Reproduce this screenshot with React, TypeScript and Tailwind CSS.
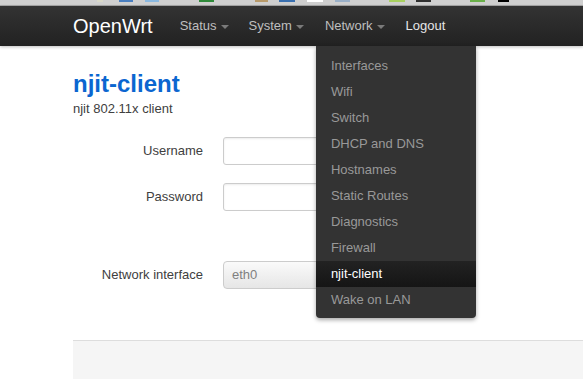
import React from "react";

const bookmarks: { left: number; width: number; color: string }[] = [
  { left: 97, width: 6, color: "#d8d8c8" },
  { left: 119, width: 14, color: "#4a7fc0" },
  { left: 145, width: 14, color: "#8ab8e0" },
  { left: 199, width: 15, color: "#2f8a3a" },
  { left: 255, width: 13, color: "#b89a6a" },
  { left: 279, width: 16, color: "#3a70b0" },
  { left: 307, width: 16, color: "#ffffff" },
  { left: 335, width: 15, color: "#9ab0c8" },
  { left: 389, width: 16, color: "#a8d060" },
  { left: 416, width: 15, color: "#303030" },
  { left: 470, width: 15, color: "#6ab04a" },
  { left: 498, width: 11, color: "#000000" },
];

const menu = [
  "Interfaces",
  "Wifi",
  "Switch",
  "DHCP and DNS",
  "Hostnames",
  "Static Routes",
  "Diagnostics",
  "Firewall",
  "njit-client",
  "Wake on LAN",
];

function Caret() {
  return (
    <span className="ml-[4px] mt-[2px] inline-block h-0 w-0 border-x-[4px] border-t-[4px] border-x-transparent border-t-[#7a7a7a]" />
  );
}

export default function App() {
  return (
    <div
      className="relative h-[379px] w-[583px] overflow-hidden bg-white"
      style={{ fontFamily: '"Liberation Sans", Arial, Helvetica, sans-serif' }}
    >
      {/* browser bookmark strip remnant */}
      <div className="relative h-[6px] border-b border-[#a8a8a8] bg-[#cfcfcf]">
        {bookmarks.map((b, i) => (
          <span
            key={i}
            className="absolute top-0 h-[2px]"
            style={{ left: b.left, width: b.width, background: b.color }}
          />
        ))}
      </div>

      {/* top bar */}
      <div className="relative z-10 flex h-[40px] items-center bg-gradient-to-b from-[#333333] to-[#222222] pl-[73px] shadow-[0_1px_3px_rgba(0,0,0,0.25)]">
        <span className="mr-[17px] text-[20px] leading-[40px] text-white">OpenWrt</span>
        <div className="flex h-full items-center">
          <div className="flex h-full items-center px-[10px] text-[13px] text-[#bfbfbf]">
            Status
            <Caret />
          </div>
          <div className="flex h-full items-center px-[10px] text-[13px] text-[#bfbfbf]">
            System
            <Caret />
          </div>
          <div className="relative flex h-full items-center pl-[11px] pr-[10px] text-[13px] text-[#bfbfbf]">
            Network
            <Caret />
            <div className="absolute left-[2px] top-[40px] w-[160px] rounded-b-[4px] bg-[#333333] pb-[5px] pt-[7px] shadow-[0_2px_4px_rgba(0,0,0,0.35)]">
              {menu.map((m) =>
                m === "njit-client" ? (
                  <div
                    key={m}
                    className="h-[26px] bg-gradient-to-b from-[#222222] to-[#151515] px-[15px] text-[13px] leading-[26px] text-white"
                  >
                    {m}
                  </div>
                ) : (
                  <div key={m} className="h-[26px] px-[15px] text-[13px] leading-[26px] text-[#999999]">
                    {m}
                  </div>
                )
              )}
            </div>
          </div>
          <div className="flex h-full items-center pl-[11px] pr-[10px] text-[13px] text-[#e6e6e6]">Logout</div>
        </div>
      </div>

      {/* content */}
      <div className="pl-[73px]">
        <h1 className="mt-[24px] text-[24px] font-bold leading-[28px] text-[#0b66d0]">njit-client</h1>
        <p className="mt-[2px] text-[13px] leading-[18px] text-[#404040]">njit 802.11x client</p>

        <div className="mt-[19px] flex h-[28px] items-center">
          <label className="mr-[20px] w-[130px] text-right text-[13px] text-[#404040]">Username</label>
          <div className="h-[28px] w-[210px] rounded-[3px] border border-[#cccccc] bg-white shadow-[inset_0_1px_2px_rgba(0,0,0,0.08)]" />
        </div>

        <div className="mt-[18px] flex h-[28px] items-center">
          <label className="mr-[20px] w-[130px] text-right text-[13px] text-[#404040]">Password</label>
          <div className="h-[28px] w-[210px] rounded-[3px] border border-[#cccccc] bg-white shadow-[inset_0_1px_2px_rgba(0,0,0,0.08)]" />
        </div>

        <div className="mt-[50px] flex h-[28px] items-center">
          <label className="mr-[20px] w-[130px] text-right text-[13px] text-[#404040]">Network interface</label>
          <div className="flex h-[28px] w-[220px] items-center rounded-[4px] border border-[#cccccc] bg-gradient-to-b from-[#fafafa] to-[#e6e6e6] pl-[8px] text-[13px] text-[#808080]">
            eth0
          </div>
        </div>
      </div>

      <div className="ml-[73px] mt-[51px] h-[60px] border-t border-[#dddddd] bg-[#f5f5f5]" />
    </div>
  );
}
